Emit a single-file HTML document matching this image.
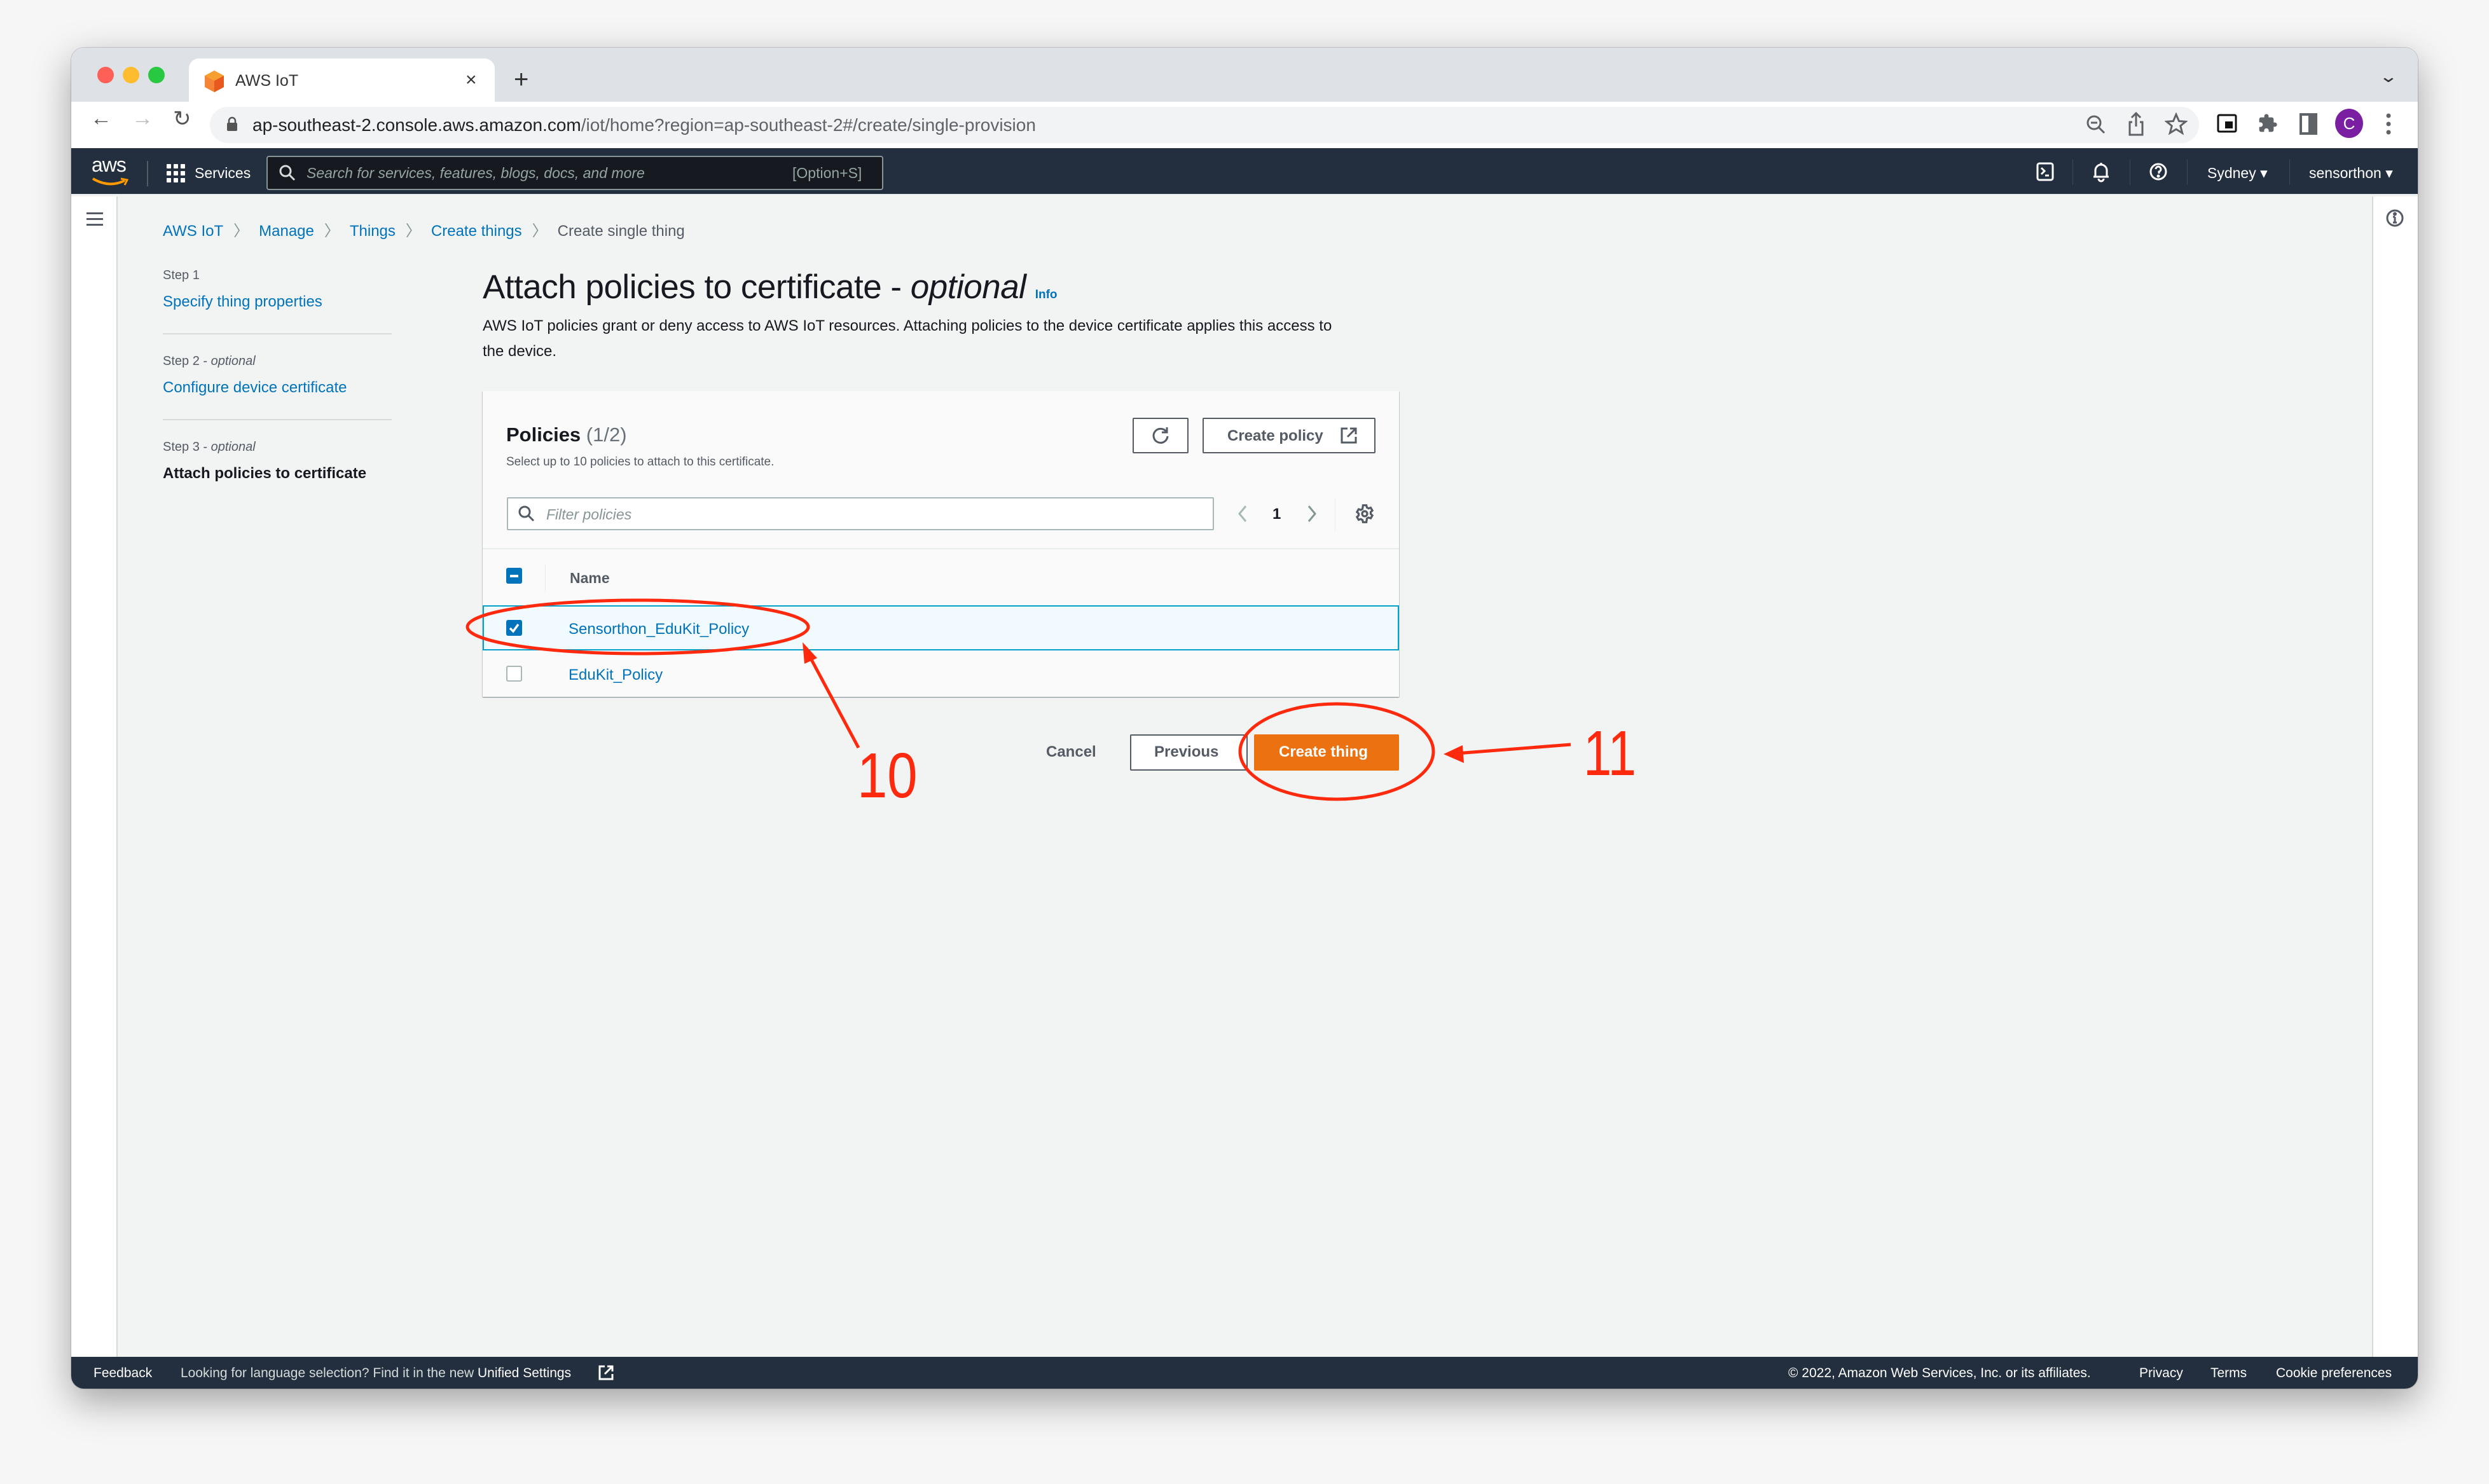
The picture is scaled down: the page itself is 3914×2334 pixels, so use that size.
<!DOCTYPE html>
<html><head><meta charset="utf-8"><style>
*{margin:0;padding:0;box-sizing:border-box}
body{width:3914px;height:2334px;background:#f6f6f6;position:relative;overflow:hidden;font-family:"Liberation Sans",sans-serif}
.a{position:absolute;white-space:nowrap}
.win{position:absolute;left:112px;top:75px;width:3690px;height:2109px;border-radius:20px;overflow:hidden;box-shadow:0 20px 60px rgba(0,0,0,.35),0 0 0 1px rgba(0,0,0,.15);background:#f2f3f3}
.lnk{color:#0073bb}
.t{font-size:24px;line-height:1}
</style></head><body>
<div class="win">
 <div class="a" style="left:0;top:0;width:3690px;height:85px;background:#dee1e6"></div>
 <div class="a" style="left:41px;top:30px;width:26px;height:26px;border-radius:50%;background:#fe5f57"></div>
 <div class="a" style="left:81px;top:30px;width:26px;height:26px;border-radius:50%;background:#febc2e"></div>
 <div class="a" style="left:121px;top:30px;width:26px;height:26px;border-radius:50%;background:#28c840"></div>
 <div class="a" style="left:185px;top:17px;width:481px;height:70px;background:#fff;border-radius:16px 16px 0 0"></div>
 <svg class="a" style="left:208px;top:35px" width="34" height="36" viewBox="0 0 34 36"><path d="M17 1 L32 9 L32 27 L17 35 L2 27 L2 9Z" fill="#f58536"/><path d="M17 17 L32 9 L32 27 L17 35Z" fill="#e8591f"/><path d="M2 9 L17 1 L32 9 L17 17Z" fill="#f7a032"/></svg>
 <div class="a" style="left:258px;top:38px;font-size:25px;color:#333">AWS IoT</div>
 <div class="a" style="left:620px;top:34px;font-size:30px;color:#333">×</div>
 <div class="a" style="left:696px;top:28px;font-size:40px;color:#333;font-weight:300">+</div>
 <div class="a" style="left:3633px;top:30px;font-size:26px;color:#333;transform:scaleX(1.4)">⌄</div>
 <div class="a" style="left:0;top:85px;width:3690px;height:73px;background:#fff"></div>
 <div class="a" style="left:30px;top:92px;font-size:34px;color:#555">←</div>
 <div class="a" style="left:95px;top:92px;font-size:34px;color:#bbb">→</div>
 <div class="a" style="left:160px;top:92px;font-size:34px;color:#555">↻</div>
 <div class="a" style="left:218px;top:93px;width:3128px;height:57px;border-radius:29px;background:#f1f3f4"></div>
 <svg class="a" style="left:244px;top:108px" width="18" height="24"><rect x="1" y="10" width="16" height="13" rx="2" fill="#555"/><path d="M4 11 V7 a5 5 0 0 1 10 0 V11" stroke="#555" stroke-width="2.5" fill="none"/></svg>
 <div class="a" style="left:285px;top:106px;font-size:28px;color:#202124">ap-southeast-2.console.aws.amazon.com<span style="color:#5f6368">/iot/home?region=ap-southeast-2#/create/single-provision</span></div>
 <svg class="a" style="left:3166px;top:103px" width="36" height="36" viewBox="0 0 36 36" fill="none" stroke="#5f6368" stroke-width="3"><circle cx="15" cy="15" r="10"/><path d="M22 22 L31 31M10 15 H20"/></svg>
 <svg class="a" style="left:3232px;top:100px" width="30" height="40" viewBox="0 0 30 40" fill="none" stroke="#5f6368" stroke-width="3"><path d="M15 3 V24 M8 10 L15 3 L22 10 M9 17 H5 V37 H25 V17 H21"/></svg>
 <svg class="a" style="left:3292px;top:102px" width="36" height="36" viewBox="0 0 24 24" fill="none" stroke="#5f6368" stroke-width="2"><path d="M12 2 L15 9 L22 9.5 L16.5 14 L18.5 21.5 L12 17.5 L5.5 21.5 L7.5 14 L2 9.5 L9 9Z"/></svg>
 <svg class="a" style="left:3374px;top:104px" width="32" height="30"><rect x="2" y="2" width="28" height="26" rx="2" fill="none" stroke="#111" stroke-width="3"/><rect x="13" y="12" width="12" height="11" fill="#111"/></svg>
 <svg class="a" style="left:3438px;top:102px" width="32" height="34" viewBox="0 0 24 24"><path d="M20.5 11H19V7a2 2 0 0 0-2-2h-4V3.5a2.5 2.5 0 0 0-5 0V5H4a2 2 0 0 0-2 2v3.8h1.5a2.7 2.7 0 0 1 0 5.4H2V20a2 2 0 0 0 2 2h3.8v-1.5a2.7 2.7 0 0 1 5.4 0V22H17a2 2 0 0 0 2-2v-4h1.5a2.5 2.5 0 0 0 0-5z" fill="#5f6368"/></svg>
 <svg class="a" style="left:3504px;top:103px" width="28" height="34"><rect x="2" y="2" width="24" height="30" fill="none" stroke="#5f6368" stroke-width="4"/><rect x="14" y="2" width="12" height="30" fill="#5f6368"/></svg>
 <div class="a" style="left:3560px;top:96px;width:44px;height:46px;border-radius:50%;background:#7b1fa2;color:#fff;font-size:26px;text-align:center;line-height:46px">C</div>
 <svg class="a" style="left:3640px;top:103px" width="8" height="34"><circle cx="4" cy="4" r="3.5" fill="#5f6368"/><circle cx="4" cy="17" r="3.5" fill="#5f6368"/><circle cx="4" cy="30" r="3.5" fill="#5f6368"/></svg>
 <div class="a" style="left:0;top:158px;width:3690px;height:74px;background:#232f3e;border-bottom:2px solid #eaeded"></div>
 <div class="a" style="left:32px;top:166px;font-size:32px;color:#fff;letter-spacing:-1px">aws</div>
 <svg class="a" style="left:32px;top:203px" width="58" height="16"><path d="M2 3 Q28 18 52 6" stroke="#ff9900" stroke-width="4" fill="none"/><path d="M46 3 L56 5 L52 13" stroke="#ff9900" stroke-width="3" fill="none"/></svg>
 <div class="a" style="left:119px;top:178px;width:2px;height:40px;background:#545b64"></div>
 <svg class="a" style="left:150px;top:183px" width="30" height="30"><g fill="#fff"><rect x="0" y="0" width="7" height="7" rx="1"/><rect x="11" y="0" width="7" height="7" rx="1"/><rect x="22" y="0" width="7" height="7" rx="1"/><rect x="0" y="11" width="7" height="7" rx="1"/><rect x="11" y="11" width="7" height="7" rx="1"/><rect x="22" y="11" width="7" height="7" rx="1"/><rect x="0" y="22" width="7" height="7" rx="1"/><rect x="11" y="22" width="7" height="7" rx="1"/><rect x="22" y="22" width="7" height="7" rx="1"/></g></svg>
 <div class="a" style="left:194px;top:184px;font-size:23px;color:#fff">Services</div>
 <div class="a" style="left:307px;top:170px;width:970px;height:54px;background:#16191f;border:2px solid #879596;border-radius:4px"></div>
 <svg class="a" style="left:326px;top:183px" width="28" height="28" fill="none" stroke="#d5dbdb" stroke-width="3"><circle cx="11" cy="11" r="8"/><path d="M17 17 L25 25"/></svg>
 <div class="a" style="left:370px;top:184px;font-size:23px;color:#95a5a6;font-style:italic">Search for services, features, blogs, docs, and more</div>
 <div class="a" style="left:1134px;top:184px;font-size:23px;color:#95a5a6">[Option+S]</div>
 <svg class="a" style="left:3090px;top:180px" width="28" height="30" fill="none" stroke="#fff" stroke-width="3"><rect x="2" y="2" width="24" height="26" rx="3"/><path d="M8 9 L13 14 L8 19 M14 21 H20"/></svg>
 <div class="a" style="left:3147px;top:176px;width:1px;height:40px;background:#414750"></div>
 <svg class="a" style="left:3178px;top:178px" width="28" height="34" fill="none" stroke="#fff" stroke-width="3"><path d="M14 3 V6 M5 25 V15 a9 9 0 0 1 18 0 V25 Z M2 25 H26 M10 28 a4 4 0 0 0 8 0"/></svg>
 <div class="a" style="left:3237px;top:176px;width:1px;height:40px;background:#414750"></div>
 <svg class="a" style="left:3267px;top:180px" width="30" height="30" fill="none" stroke="#fff" stroke-width="3"><circle cx="15" cy="15" r="12"/><path d="M11 11 a4 4 0 1 1 5 4 V18"/><circle cx="15" cy="22" r="1" fill="#fff"/></svg>
 <div class="a" style="left:3327px;top:176px;width:1px;height:40px;background:#414750"></div>
 <div class="a" style="left:3359px;top:184px;font-size:23px;color:#fff">Sydney ▾</div>
 <div class="a" style="left:3488px;top:176px;width:1px;height:40px;background:#414750"></div>
 <div class="a" style="left:3519px;top:184px;font-size:23px;color:#fff">sensorthon ▾</div>
 <div class="a" style="left:0;top:234px;width:73px;height:1825px;background:#fff;border-right:2px solid #d5dbdb"></div>
 <div class="a" style="left:24px;top:259px;width:26px;height:3px;background:#545b64;box-shadow:0 9px 0 #545b64,0 18px 0 #545b64"></div>
 <div class="a" style="left:3618px;top:234px;width:72px;height:1825px;background:#fff;border-left:2px solid #d5dbdb"></div>
 <svg class="a" style="left:3639px;top:253px" width="30" height="30" fill="none" stroke="#545b64" stroke-width="3"><circle cx="15" cy="15" r="12"/><path d="M15 13 V22 M12 22 H18 M12 13 H15" /><circle cx="15" cy="8.5" r="1.5" fill="#545b64"/></svg>
 <div class="a t" style="left:144px;top:277px;font-size:24px"><span class="lnk">AWS IoT</span><span style="color:#879596;margin:0 16px">〉</span><span class="lnk">Manage</span><span style="color:#879596;margin:0 16px">〉</span><span class="lnk">Things</span><span style="color:#879596;margin:0 16px">〉</span><span class="lnk">Create things</span><span style="color:#879596;margin:0 16px">〉</span><span style="color:#545b64">Create single thing</span></div>
 <div class="a" style="left:144px;top:347px;font-size:20px;color:#545b64">Step 1</div>
 <div class="a lnk" style="left:144px;top:386px;font-size:24px">Specify thing properties</div>
 <div class="a" style="left:144px;top:449px;width:360px;height:2px;background:#d5dbdb"></div>
 <div class="a" style="left:144px;top:482px;font-size:20px;color:#545b64">Step 2 - <i>optional</i></div>
 <div class="a lnk" style="left:144px;top:521px;font-size:24px">Configure device certificate</div>
 <div class="a" style="left:144px;top:584px;width:360px;height:2px;background:#d5dbdb"></div>
 <div class="a" style="left:144px;top:617px;font-size:20px;color:#545b64">Step 3 - <i>optional</i></div>
 <div class="a" style="left:144px;top:656px;font-size:24px;color:#16191f;font-weight:bold">Attach policies to certificate</div>
 <div class="a" style="left:647px;top:346px;font-size:53px;color:#16191f;letter-spacing:-0.5px">Attach policies to certificate - <i>optional</i> <span class="lnk" style="font-size:19px;font-weight:bold;letter-spacing:0">Info</span></div>
 <div class="a" style="left:647px;top:418px;font-size:24px;color:#16191f;line-height:40px">AWS IoT policies grant or deny access to AWS IoT resources. Attaching policies to the device certificate applies this access to<br>the device.</div>
 <div class="a" style="left:647px;top:540px;width:1441px;height:481px;background:#fafafa;box-shadow:0 1px 1px rgba(0,28,36,.3),1px 1px 1px rgba(0,28,36,.15),-1px 1px 1px rgba(0,28,36,.15)"></div>
 <div class="a" style="left:684px;top:591px;font-size:31px;color:#16191f;font-weight:bold">Policies <span style="font-weight:normal;color:#687078">(1/2)</span></div>
 <div class="a" style="left:684px;top:641px;font-size:19px;color:#545b64">Select up to 10 policies to attach to this certificate.</div>
 <div class="a" style="left:1669px;top:582px;width:88px;height:56px;border:2px solid #545b64;border-radius:2px;background:#fff"></div>
 <svg class="a" style="left:1697px;top:594px" width="32" height="32" fill="none" stroke="#545b64" stroke-width="3"><path d="M25 10 A11 11 0 1 0 27 17"/><path d="M26 3 V11 H18"/></svg>
 <div class="a" style="left:1779px;top:582px;width:272px;height:56px;border:2px solid #545b64;border-radius:2px;background:#fff"></div>
 <div class="a" style="left:1818px;top:597px;font-size:24px;color:#545b64;font-weight:bold">Create policy</div>
 <svg class="a" style="left:1995px;top:596px" width="28" height="28" fill="none" stroke="#545b64" stroke-width="3"><path d="M12 3 H3 V25 H25 V16 M16 3 H25 V12 M25 3 L12 16"/></svg>
 <div class="a" style="left:685px;top:707px;width:1112px;height:52px;border:2px solid #aab7b8;border-radius:2px;background:#fff"></div>
 <svg class="a" style="left:702px;top:719px" width="28" height="30" fill="none" stroke="#545b64" stroke-width="3"><circle cx="11" cy="11" r="8"/><path d="M17 17 L25 25"/></svg>
 <div class="a" style="left:747px;top:721px;font-size:23px;color:#879596;font-style:italic">Filter policies</div>
 <svg class="a" style="left:1834px;top:718px" width="16" height="30" fill="none" stroke="#aab7b8" stroke-width="3"><path d="M13 3 L3 15 L13 27"/></svg>
 <div class="a" style="left:1889px;top:720px;font-size:24px;color:#16191f;font-weight:bold">1</div>
 <svg class="a" style="left:1943px;top:718px" width="16" height="30" fill="none" stroke="#879596" stroke-width="3"><path d="M3 3 L13 15 L3 27"/></svg>
 <div class="a" style="left:1987px;top:708px;width:1px;height:52px;background:#eaeded"></div>
 <svg class="a" style="left:2018px;top:717px" width="32" height="32" viewBox="0 0 24 24" fill="none" stroke="#545b64" stroke-width="2.4"><path d="M10 2h4l.6 2.6 2 1.1 2.5-.9 2 3.4-2 1.8v2.2l2 1.8-2 3.4-2.5-.9-2 1.1L14 22h-4l-.6-2.6-2-1.1-2.5.9-2-3.4 2-1.8v-2.2l-2-1.8 2-3.4 2.5.9 2-1.1z"/><circle cx="12" cy="12" r="3"/></svg>
 <div class="a" style="left:647px;top:787px;width:1441px;height:2px;background:#eaeded"></div>
 <div class="a" style="left:684px;top:818px;width:25px;height:25px;border-radius:3px;background:#0073bb"></div>
 <div class="a" style="left:690px;top:829px;width:13px;height:4px;background:#fff"></div>
 <div class="a" style="left:745px;top:812px;width:1px;height:44px;background:#eaeded"></div>
 <div class="a" style="left:784px;top:821px;font-size:23px;color:#545b64;font-weight:bold">Name</div>
 <div class="a" style="left:647px;top:877px;width:1441px;height:71px;background:#f1faff;border:2px solid #00a1c9"></div>
 <div class="a" style="left:684px;top:900px;width:25px;height:25px;border-radius:3px;background:#0073bb"></div>
 <svg class="a" style="left:684px;top:900px" width="25" height="25" fill="none" stroke="#fff" stroke-width="3.5"><path d="M6 13 L11 18 L19 7"/></svg>
 <div class="a lnk" style="left:782px;top:901px;font-size:24px">Sensorthon_EduKit_Policy</div>
 <div class="a" style="left:684px;top:972px;width:25px;height:25px;border-radius:3px;background:#fff;border:2px solid #aab7b8"></div>
 <div class="a lnk" style="left:782px;top:973px;font-size:24px">EduKit_Policy</div>
 <div class="a" style="left:1533px;top:1094px;font-size:24px;color:#545b64;font-weight:bold">Cancel</div>
 <div class="a" style="left:1665px;top:1080px;width:185px;height:57px;border:2px solid #545b64;border-radius:2px;background:#fff"></div>
 <div class="a" style="left:1703px;top:1094px;font-size:24px;color:#545b64;font-weight:bold">Previous</div>
 <div class="a" style="left:1860px;top:1080px;width:228px;height:57px;border-radius:2px;background:#ec7211"></div>
 <div class="a" style="left:1899px;top:1094px;font-size:24px;color:#fff;font-weight:bold">Create thing</div>
 <div class="a" style="left:0;top:2059px;width:3690px;height:50px;background:#232f3e"></div>
 <div class="a" style="left:35px;top:2073px;font-size:21px;color:#fff">Feedback</div>
 <div class="a" style="left:172px;top:2073px;font-size:21px;color:#d5dbdb">Looking for language selection? Find it in the new <span style="color:#fff">Unified Settings</span></div>
 <svg class="a" style="left:828px;top:2071px" width="26" height="26" fill="none" stroke="#fff" stroke-width="3"><path d="M11 3 H3 V23 H23 V15 M15 3 H23 V11 M23 3 L11 15"/></svg>
 <div class="a" style="left:2700px;top:2073px;font-size:21px;color:#fff">© 2022, Amazon Web Services, Inc. or its affiliates.</div>
 <div class="a" style="left:3252px;top:2073px;font-size:21px;color:#fff">Privacy</div>
 <div class="a" style="left:3364px;top:2073px;font-size:21px;color:#fff">Terms</div>
 <div class="a" style="left:3467px;top:2073px;font-size:21px;color:#fff">Cookie preferences</div>
</div>
<svg class="a" style="left:0;top:0" width="3914" height="2334">
 <ellipse cx="1003" cy="986" rx="268" ry="42" fill="none" stroke="#ff2a0d" stroke-width="5"/>
 <line x1="1350" y1="1176" x2="1272" y2="1030" stroke="#ff2a0d" stroke-width="5"/>
 <path d="M1262 1010 L1285 1035 L1265 1044Z" fill="#ff2a0d"/>
 <ellipse cx="2102" cy="1182" rx="152" ry="75" fill="none" stroke="#ff2a0d" stroke-width="5"/>
 <line x1="2470" y1="1171" x2="2290" y2="1185" stroke="#ff2a0d" stroke-width="5"/>
 <path d="M2270 1186 L2300 1172 L2302 1200Z" fill="#ff2a0d"/>
 <text x="1348" y="1254" font-family="Liberation Sans, sans-serif" font-size="100" fill="#ff2a0d" transform="translate(1348 0) scale(0.85 1) translate(-1348 0)">10</text>
 <text x="2490" y="1219" font-family="Liberation Sans, sans-serif" font-size="100" fill="#ff2a0d" transform="translate(2490 0) scale(0.8 1) translate(-2490 0)">11</text>
</svg>
</body></html>
